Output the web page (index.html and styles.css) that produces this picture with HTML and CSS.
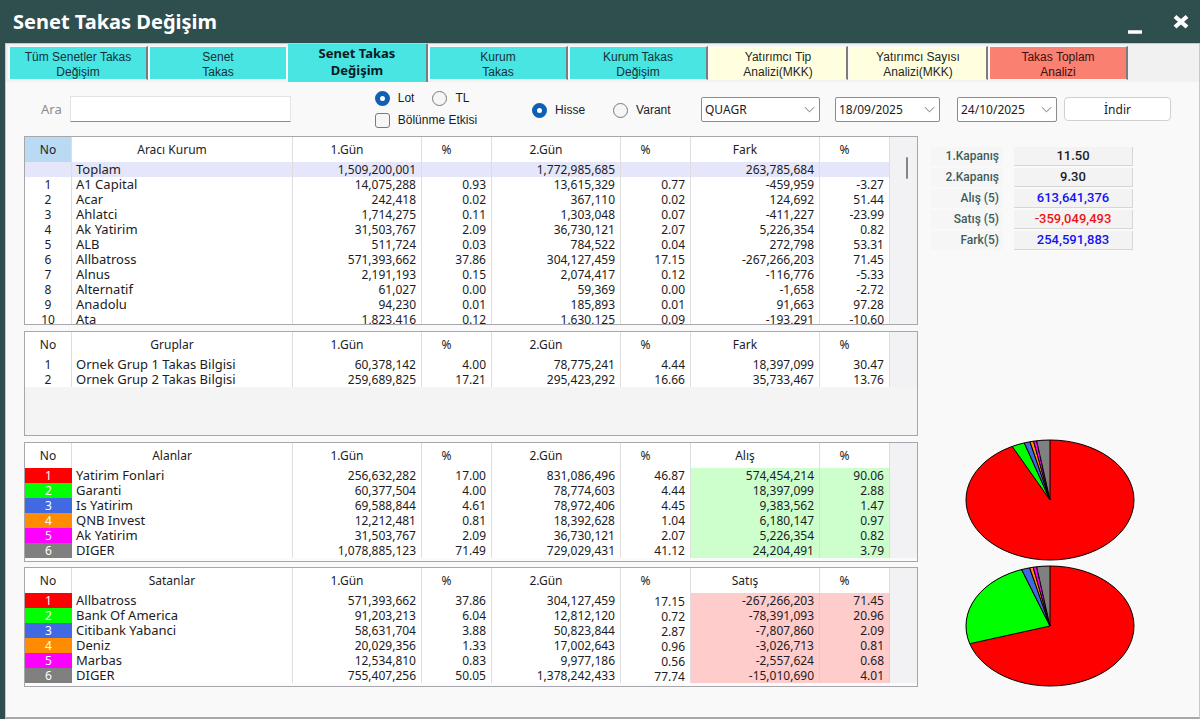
FILE: index.html
```html
<!DOCTYPE html>
<html lang="tr">
<head>
<meta charset="utf-8">
<title>Senet Takas Değişim</title>
<link rel="stylesheet" href="styles.css">
</head>
<body>
<header class="titlebar">
  <h1>Senet Takas Değişim</h1>
  <div class="window-buttons">
    <button type="button" class="win-btn" aria-label="Küçült"><svg width="16" height="16" viewBox="0 0 16 16"><path d="M1 14h14" stroke="#fff" stroke-width="3.500"/></svg></button>
    <button type="button" class="win-btn" aria-label="Kapat"><svg width="16" height="16" viewBox="0 0 16 16"><path d="M2 2.500l12 10.500M14 2.500l-12 10.500" stroke="#fff" stroke-width="4.200"/></svg></button>
  </div>
</header>
<div class="window">
  <nav class="tabs">
    <button type="button" class="tab">Tüm Senetler Takas<br>Değişim</button>
    <button type="button" class="tab before-active">Senet<br>Takas</button>
    <button type="button" class="tab active">Senet Takas<br>Değişim</button>
    <button type="button" class="tab">Kurum<br>Takas</button>
    <button type="button" class="tab">Kurum Takas<br>Değişim</button>
    <button type="button" class="tab yellow">Yatırımcı Tip<br>Analizi(MKK)</button>
    <button type="button" class="tab yellow">Yatırımcı Sayısı<br>Analizi(MKK)</button>
    <button type="button" class="tab salmon">Takas Toplam<br>Analizi</button>
  </nav>
  <main class="page">
    <form class="filters">
      <label class="search-label" for="ara">Ara</label>
      <input class="search" id="ara" type="text">
      <div class="options">
        <div class="option-row">
          <label class="choice"><input type="radio" name="birim" checked>Lot</label>
          <label class="choice"><input type="radio" name="birim">TL</label>
        </div>
        <label class="choice"><input type="checkbox">Bölünme Etkisi</label>
      </div>
      <div class="kinds">
        <label class="choice"><input type="radio" name="tur" checked>Hisse</label>
        <label class="choice"><input type="radio" name="tur">Varant</label>
      </div>
      <div class="combo symbol">
        <select aria-label="Senet"><option>QUAGR</option></select>
        <svg class="chevron" viewBox="0 0 12 8"><path d="M1 1l5 5 5-5"/></svg>
      </div>
      <div class="combo from">
        <select aria-label="Başlangıç tarihi"><option>18/09/2025</option></select>
        <svg class="chevron" viewBox="0 0 12 8"><path d="M1 1l5 5 5-5"/></svg>
      </div>
      <div class="combo to">
        <select aria-label="Bitiş tarihi"><option>24/10/2025</option></select>
        <svg class="chevron" viewBox="0 0 12 8"><path d="M1 1l5 5 5-5"/></svg>
      </div>
      <button type="button" class="download">İndir</button>
    </form>

    <div class="content">
      <div class="grids">
        <section class="grid brokers">
          <table>
            <colgroup><col class="c-no"><col><col class="c-val"><col class="c-pct"><col class="c-val"><col class="c-pct"><col class="c-val"><col class="c-pct"><col class="c-end"></colgroup>
            <thead><tr><th class="sorted">No</th><th>Aracı Kurum</th><th>1.Gün</th><th>%</th><th>2.Gün</th><th>%</th><th>Fark</th><th>%</th><td class="end"></td></tr></thead>
            <tbody>
              <tr class="total"><td></td><td>Toplam</td><td>1,509,200,001</td><td></td><td>1,772,985,685</td><td></td><td>263,785,684</td><td></td><td class="end"></td></tr>
              <tr><td>1</td><td>A1 Capital</td><td>14,075,288</td><td>0.93</td><td>13,615,329</td><td>0.77</td><td>-459,959</td><td>-3.27</td><td class="end"></td></tr>
              <tr><td>2</td><td>Acar</td><td>242,418</td><td>0.02</td><td>367,110</td><td>0.02</td><td>124,692</td><td>51.44</td><td class="end"></td></tr>
              <tr><td>3</td><td>Ahlatci</td><td>1,714,275</td><td>0.11</td><td>1,303,048</td><td>0.07</td><td>-411,227</td><td>-23.99</td><td class="end"></td></tr>
              <tr><td>4</td><td>Ak Yatirim</td><td>31,503,767</td><td>2.09</td><td>36,730,121</td><td>2.07</td><td>5,226,354</td><td>0.82</td><td class="end"></td></tr>
              <tr><td>5</td><td>ALB</td><td>511,724</td><td>0.03</td><td>784,522</td><td>0.04</td><td>272,798</td><td>53.31</td><td class="end"></td></tr>
              <tr><td>6</td><td>Allbatross</td><td>571,393,662</td><td>37.86</td><td>304,127,459</td><td>17.15</td><td>-267,266,203</td><td>71.45</td><td class="end"></td></tr>
              <tr><td>7</td><td>Alnus</td><td>2,191,193</td><td>0.15</td><td>2,074,417</td><td>0.12</td><td>-116,776</td><td>-5.33</td><td class="end"></td></tr>
              <tr><td>8</td><td>Alternatif</td><td>61,027</td><td>0.00</td><td>59,369</td><td>0.00</td><td>-1,658</td><td>-2.72</td><td class="end"></td></tr>
              <tr><td>9</td><td>Anadolu</td><td>94,230</td><td>0.01</td><td>185,893</td><td>0.01</td><td>91,663</td><td>97.28</td><td class="end"></td></tr>
              <tr><td>10</td><td>Ata</td><td>1,823,416</td><td>0.12</td><td>1,630,125</td><td>0.09</td><td>-193,291</td><td>-10.60</td><td class="end"></td></tr>
            </tbody>
          </table>
          <div class="scroll-thumb"></div>
        </section>

        <section class="grid groups">
          <table>
            <colgroup><col class="c-no"><col><col class="c-val"><col class="c-pct"><col class="c-val"><col class="c-pct"><col class="c-val"><col class="c-pct"><col class="c-end"></colgroup>
            <thead><tr><th>No</th><th>Gruplar</th><th>1.Gün</th><th>%</th><th>2.Gün</th><th>%</th><th>Fark</th><th>%</th><td class="end"></td></tr></thead>
            <tbody>
              <tr><td>1</td><td>Ornek Grup 1 Takas Bilgisi</td><td>60,378,142</td><td>4.00</td><td>78,775,241</td><td>4.44</td><td>18,397,099</td><td>30.47</td><td class="end"></td></tr>
              <tr><td>2</td><td>Ornek Grup 2 Takas Bilgisi</td><td>259,689,825</td><td>17.21</td><td>295,423,292</td><td>16.66</td><td>35,733,467</td><td>13.76</td><td class="end"></td></tr>
            </tbody>
          </table>
        </section>

        <section class="grid ranked buyers">
          <table>
            <colgroup><col class="c-no"><col><col class="c-val"><col class="c-pct"><col class="c-val"><col class="c-pct"><col class="c-val"><col class="c-pct"><col class="c-end"></colgroup>
            <thead><tr><th>No</th><th>Alanlar</th><th>1.Gün</th><th>%</th><th>2.Gün</th><th>%</th><th>Alış</th><th>%</th><td class="end"></td></tr></thead>
            <tbody>
              <tr><td>1</td><td>Yatirim Fonlari</td><td>256,632,282</td><td>17.00</td><td>831,086,496</td><td>46.87</td><td>574,454,214</td><td>90.06</td><td class="end"></td></tr>
              <tr><td>2</td><td>Garanti</td><td>60,377,504</td><td>4.00</td><td>78,774,603</td><td>4.44</td><td>18,397,099</td><td>2.88</td><td class="end"></td></tr>
              <tr><td>3</td><td>Is Yatirim</td><td>69,588,844</td><td>4.61</td><td>78,972,406</td><td>4.45</td><td>9,383,562</td><td>1.47</td><td class="end"></td></tr>
              <tr><td>4</td><td>QNB Invest</td><td>12,212,481</td><td>0.81</td><td>18,392,628</td><td>1.04</td><td>6,180,147</td><td>0.97</td><td class="end"></td></tr>
              <tr><td>5</td><td>Ak Yatirim</td><td>31,503,767</td><td>2.09</td><td>36,730,121</td><td>2.07</td><td>5,226,354</td><td>0.82</td><td class="end"></td></tr>
              <tr><td>6</td><td>DIGER</td><td>1,078,885,123</td><td>71.49</td><td>729,029,431</td><td>41.12</td><td>24,204,491</td><td>3.79</td><td class="end"></td></tr>
            </tbody>
          </table>
        </section>

        <section class="grid ranked sellers">
          <table>
            <colgroup><col class="c-no"><col><col class="c-val"><col class="c-pct"><col class="c-val"><col class="c-pct"><col class="c-val"><col class="c-pct"><col class="c-end"></colgroup>
            <thead><tr><th>No</th><th>Satanlar</th><th>1.Gün</th><th>%</th><th>2.Gün</th><th>%</th><th>Satış</th><th>%</th><td class="end"></td></tr></thead>
            <tbody>
              <tr><td>1</td><td>Allbatross</td><td>571,393,662</td><td>37.86</td><td>304,127,459</td><td>17.15</td><td>-267,266,203</td><td>71.45</td><td class="end"></td></tr>
              <tr><td>2</td><td>Bank Of America</td><td>91,203,213</td><td>6.04</td><td>12,812,120</td><td>0.72</td><td>-78,391,093</td><td>20.96</td><td class="end"></td></tr>
              <tr><td>3</td><td>Citibank Yabanci</td><td>58,631,704</td><td>3.88</td><td>50,823,844</td><td>2.87</td><td>-7,807,860</td><td>2.09</td><td class="end"></td></tr>
              <tr><td>4</td><td>Deniz</td><td>20,029,356</td><td>1.33</td><td>17,002,643</td><td>0.96</td><td>-3,026,713</td><td>0.81</td><td class="end"></td></tr>
              <tr><td>5</td><td>Marbas</td><td>12,534,810</td><td>0.83</td><td>9,977,186</td><td>0.56</td><td>-2,557,624</td><td>0.68</td><td class="end"></td></tr>
              <tr><td>6</td><td>DIGER</td><td>755,407,256</td><td>50.05</td><td>1,378,242,433</td><td>77.74</td><td>-15,010,690</td><td>4.01</td><td class="end"></td></tr>
            </tbody>
          </table>
        </section>
      </div>

      <aside class="side">
        <dl class="stats">
          <dt>1.Kapanış</dt><dd>11.50</dd>
          <dt>2.Kapanış</dt><dd>9.30</dd>
          <dt>Alış (5)</dt><dd class="blue">613,641,376</dd>
          <dt>Satış (5)</dt><dd class="red">-359,049,493</dd>
          <dt>Fark(5)</dt><dd class="blue">254,591,883</dd>
        </dl>
        <div class="pies">
          <svg class="pie" viewBox="-85 -61 170 122" role="img" aria-label="Alanlar">
            <clipPath id="disc"><ellipse rx="84" ry="60"/></clipPath>
            <ellipse rx="84" ry="60" fill="#f00"/>
            <g clip-path="url(#disc)" stroke="#000" stroke-width="1">
              <path fill="#0f0" d="M0 0L-115-163L-82-182Z"/>
              <path fill="#4169e1" d="M0 0L-82-182L-65-189Z"/>
              <path fill="#ff8c00" d="M0 0L-65-189L-54-193Z"/>
              <path fill="#f0f" d="M0 0L-54-193L-44-195Z"/>
              <path fill="#808080" d="M0 0L-44-195L0-200Z"/>
            </g>
            <ellipse rx="84" ry="60" fill="none" stroke="#000"/>
          </svg>
          <svg class="pie" viewBox="-85 -61 170 122" role="img" aria-label="Satanlar">
            <ellipse rx="84" ry="60" fill="#f00"/>
            <g clip-path="url(#disc)" stroke="#000" stroke-width="1">
              <path fill="#0f0" d="M0 0L-195 43L-195-179L-90-179Z"/>
              <path fill="#4169e1" d="M0 0L-90-179L-66-189Z"/>
              <path fill="#ff8c00" d="M0 0L-66-189L-55-192Z"/>
              <path fill="#f0f" d="M0 0L-55-192L-44-195Z"/>
              <path fill="#808080" d="M0 0L-44-195L0-200Z"/>
            </g>
            <ellipse rx="84" ry="60" fill="none" stroke="#000"/>
          </svg>
        </div>
      </aside>
    </div>
  </main>
</div>
</body>
</html>
```
FILE: styles.css
```css
* { box-sizing: border-box; }

body {
  margin: 0;
  min-height: 100vh;
  display: flex;
  flex-direction: column;
  background: #2f4f4f;
  color: #1c1c24;
  font: 12px/15px "Noto Sans", "Open Sans", sans-serif;
}

button, input, select { font: inherit; color: inherit; margin: 0; }

/* Title bar */
.titlebar {
  display: flex;
  justify-content: space-between;
  align-items: center;
  height: 43px;
  padding: 0 11px 0 13px;
}
.titlebar h1 {
  margin: 0;
  color: #fff;
  font: bold 20px/24px "Noto Sans", sans-serif;
}
.window-buttons { display: flex; gap: 30px; align-items: flex-end; }
.win-btn { border: 0; padding: 0; background: none; height: 24px; width: 16px; }
.win-btn svg { display: block; }
.win-btn:first-child { padding-top: 8px; }

/* Window frame and tabs */
.window {
  flex: 1;
  display: flex;
  flex-direction: column;
  margin-left: 5px;
  border: 1px solid #c8c8c8;
  border-width: 1px 1px 2px;
  border-bottom-color: #a8a8a8;
  background: #f9f9f9;
}
.tabs {
  display: flex;
  align-items: center;
  height: 38px;
  padding-left: 2px;
  background: #f1f1f1;
}
.tab {
  flex: 0 1 140px;
  height: 34px;
  padding: 3px 0 0;
  border: solid #f9f9f9;
  border-width: 1px 2px 1px 2px;
  border-right-color: #7c7c7c;
  background: #48e5e3;
  color: #16303a;
  font: 12px/15px "Liberation Sans", Arial, sans-serif;
}
.tab.before-active { border-right-color: #f9f9f9; }
.tab.active {
  height: 38px;
  padding: 0 0 3px;
  border-width: 0 2px 0 0;
  color: #061c24;
  font: bold 13px/17px "Noto Sans", sans-serif;
}
.tab.yellow { background: #ffffe0; color: #26261c; }
.tab.salmon { background: #fa8072; color: #3a1010; }

/* Filter bar */
.filters {
  display: flex;
  align-items: center;
  height: 54px;
  padding: 0 28px 0 35px;
}
.search-label { color: #8c8c8c; margin-right: 8px; font-size: 13px; }
.search {
  flex: 0 1 221px;
  min-width: 60px;
  height: 26px;
  border: 1px solid #e4e4e4;
  border-bottom: 1px solid #8a8a8a;
  background: #fff;
}
.options { display: flex; flex-direction: column; gap: 6px; margin-left: 84px; }
.option-row { display: flex; gap: 18px; }
.choice {
  display: flex;
  align-items: center;
  gap: 8px;
  height: 16px;
  white-space: nowrap;
  font-family: "Liberation Sans", Arial, sans-serif;
}
.choice input {
  flex: none;
  appearance: none;
  width: 15px;
  height: 15px;
  border: 1px solid #7a7a7a;
  background: #f6f6f6;
}
.choice input[type="radio"] { border-radius: 50%; }
.choice input[type="checkbox"] { border-radius: 3px; }
.choice input[type="radio"]:checked { border: 5px solid #0f5fb4; background: #fff; }
.kinds { display: flex; gap: 28px; margin-left: 55px; padding-top: 2px; }
.combo { position: relative; height: 25px; }
.combo select {
  appearance: none;
  width: 100%;
  height: 100%;
  padding: 0 3px;
  border: 1px solid #8c8c8c;
  border-radius: 2px;
  background: #fff;
}
.chevron {
  position: absolute;
  right: 5px;
  top: 9px;
  width: 11px;
  height: 8px;
  fill: none;
  stroke: #666;
  pointer-events: none;
}
.symbol { width: 119px; margin-left: auto; }
.from { width: 105px; margin-left: 15px; }
.to { width: 100px; margin-left: 17px; }
.download {
  width: 107px;
  height: 24px;
  margin-left: 7px;
  padding: 0;
  border: 1px solid #d0d0d0;
  border-radius: 4px;
  background: #fff;
}

/* Data grids */
.content { display: flex; gap: 13px; padding: 0 17px 29px 18px; }
.grids { flex: 1; min-width: 0; display: flex; flex-direction: column; gap: 6px; }
.grid {
  position: relative;
  overflow: hidden;
  border: 1px solid #a6a6ac;
  background: #f4f4f4;
}
.brokers { height: 189px; }
.groups { height: 105px; }
.ranked { background: #fbfbfb; padding-bottom: 3px; }
.sellers { margin-top: -1px; }

table { width: 100%; table-layout: fixed; border-collapse: separate; border-spacing: 0; }
.c-no { width: 47px; }
.c-val { width: 129px; }
.c-pct { width: 70px; }
.c-end { width: 27px; }

th {
  height: 25px;
  padding: 0 20px 0 0;
  font-weight: normal;
  background: #fff;
  border-right: 1px solid #dedede;
}
th:first-child { padding: 0; }
th.sorted { background: #b9daf2; }
td {
  height: 15px;
  padding: 0 5px;
  text-align: right;
  white-space: nowrap;
  background: #fff;
  border-right: 1px solid #dedede;
}
td:first-child { text-align: center; }
td:nth-child(2) { padding-left: 4px; text-align: left; font-size: 13px; }
td.end { background: #f2f2f4; border: 0; }
.total td { background: #e6e6fa; }
.total td.end { background: #f2f2f4; }

.ranked tbody td:first-child { color: #fff; border-right: 0; }
.ranked tbody tr:nth-child(1) td:first-child { background: #f00; }
.ranked tbody tr:nth-child(2) td:first-child { background: #0f0; }
.ranked tbody tr:nth-child(3) td:first-child { background: #4169e1; }
.ranked tbody tr:nth-child(4) td:first-child { background: #ff8c00; }
.ranked tbody tr:nth-child(5) td:first-child { background: #f0f; }
.ranked tbody tr:nth-child(6) td:first-child { background: #808080; }
.buyers tbody td:nth-child(7), .buyers tbody td:nth-child(8) { background: #ccffcc; border-color: #c2eec2; }
.sellers tbody td:nth-child(7), .sellers tbody td:nth-child(8) { background: #ffcccc; border-color: #f0c4c4; }
.sellers tbody td:nth-child(6) { padding-top: 3px; line-height: 12px; }

.scroll-thumb {
  position: absolute;
  top: 20px;
  right: 9px;
  width: 2px;
  height: 22px;
  border-radius: 1px;
  background: #858585;
}

/* Side summary */
.side { flex: none; width: 251px; display: flex; flex-direction: column; }
.stats {
  display: grid;
  grid-template-columns: 72px 119px;
  grid-auto-rows: 19px;
  gap: 2px 11px;
  margin: 11px 0 0;
  font: 500 13px/18px Roboto, "Liberation Sans", sans-serif;
}
.stats dt { padding-right: 4px; text-align: right; color: #3f5c5c; background: #f6f6f6; font-size: 12px; }
.stats dd {
  margin: 0;
  text-align: center;
  background: #f3f3f3;
  border: solid #d6d6d6;
  border-width: 0 1px 1px 0;
}
.blue { color: #1414f0; }
.red { color: #f01414; }
.pies { display: flex; flex-direction: column; gap: 4px; width: 170px; margin: auto 0 0 34px; }
.pie { display: block; width: 100%; height: auto; }
```
